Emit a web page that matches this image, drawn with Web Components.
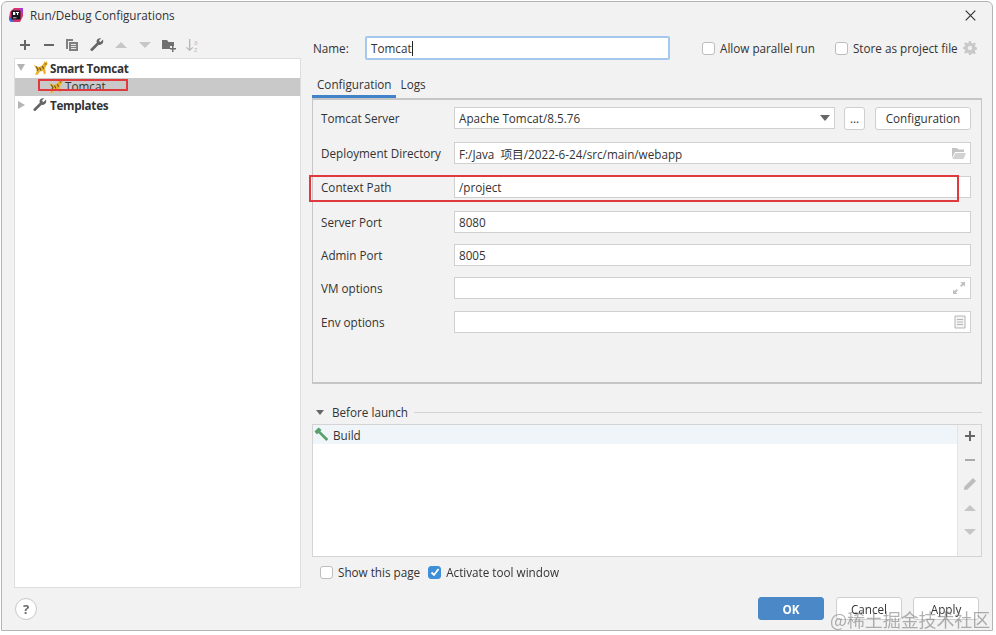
<!DOCTYPE html>
<html>
<head>
<meta charset="utf-8">
<title>Run/Debug Configurations</title>
<style>
  html, body { margin: 0; padding: 0; background: #fff; }
  body { width: 996px; height: 635px; overflow: hidden; font-family: "Open Sans", "Noto Sans CJK SC", sans-serif; font-size: 11.7px; color: #333; }
</style>
</head>
<body>
<run-dialog></run-dialog>

<script>
const icons = {
  plus: '<svg width="14" height="14" viewBox="0 0 14 14"><path d="M6 2h2v4h4v2H8v4H6V8H2V6h4z" fill="#666"/></svg>',
  minus: '<svg width="14" height="14" viewBox="0 0 14 14"><path d="M2 6h10v2H2z" fill="#666"/></svg>',
  copy: '<svg width="14" height="14" viewBox="0 0 14 14"><path d="M1 1h7v2H3v8H1z" fill="#808080"/><path d="M4 4h9v9H4z" fill="#808080"/><path d="M6 6h5v1H6zm0 2h5v1H6zm0 2h5v1H6z" fill="#e6e6e6"/></svg>',
  wrench: '<svg width="14" height="14" viewBox="0 0 14 14"><path d="M13 1.500 10.600 4l-1-.4L9 2.300 11.200.6C9.400-.2 7 .8 6.600 2.800c-.1.7 0 1.300.2 1.900L1 10.500c-.8.800-.8 1.500-.2 2.100s1.400.6 2.100-.1l5.800-5.800c2.700.9 5.400-1.700 4.300-4.700z" fill="currentColor"/></svg>',
  up: '<svg width="14" height="14" viewBox="0 0 14 14"><path d="M7 4l6 6H1z" fill="#c6c6c6"/></svg>',
  down: '<svg width="14" height="14" viewBox="0 0 14 14"><path d="M1 4h12l-6 6z" fill="#c6c6c6"/></svg>',
  folder: '<svg width="15" height="14" viewBox="0 0 15 14"><path d="M1 2h5l1.500 2H13v4H9v3H1z" fill="#707070"/><path d="M11 8h1.500v2H15v1.500h-2.500V14H11v-2.500H9V10h2z" fill="#707070"/></svg>',
  sort: '<svg width="15" height="15" viewBox="0 0 15 15"><path d="M4 1h1.300v10L7.500 9l.7.8L4.600 13 1 9.800l.8-.8L4 11z" fill="#b5b5b5"/><text x="9" y="6.500" font-size="6.500" font-family="Open Sans" fill="#bdbdbd">a</text><text x="9" y="14" font-size="7" font-family="Open Sans" fill="#bdbdbd">z</text></svg>',
  cat: '<svg width="15" height="14" viewBox="0 0 15 14"><path d="M.5 3.500 3 5l3 1 3-1.500L11 2l.3-2 1.200 1.200L14 .3l.5 2.700-1.500 2.500-1 2L13 12l-2 1.500-1-3.500-3 .5-2 3-3 .5 2-4.500-1.500-3z" fill="#eeb32e"/><path d="M3 5.500 5 8.500 4 10M6.500 6.500 8 9.500M9.500 5 10.500 8M11.500 3h2" stroke="#6b5a1e" stroke-width="1.200" fill="none"/></svg>',
  hammer: '<svg width="15" height="15" viewBox="0 0 15 15"><path d="M.5 4.500 4.500.5l3 2.300L6.300 4.200l8 7.900-2 2-7.900-8-1.400 1.400z" fill="#58a06c"/></svg>',
  pencil: '<svg width="14" height="14" viewBox="0 0 14 14"><path d="M10 1l3 3-8.500 8.500L1 13l.5-3.500z" fill="#bdbdbd"/></svg>',
  gear: '<svg width="14" height="14" viewBox="0 0 14 14"><path d="M6 0h2l.4 2 1.400.6L11.500 1.500 12.900 3l-1.100 1.600.6 1.400 1.600.4v2l-1.600.4-.6 1.400 1.100 1.700-1.400 1.400-1.700-1.100-1.400.6L8 14H6l-.4-1.700-1.400-.6-1.700 1.100-1.400-1.400 1.100-1.700-.6-1.400L0 8V6l1.600-.4.6-1.400L1.100 2.600 2.500 1.200l1.700 1.100L5.600 1.700z" fill="#c9c9c9"/><circle cx="7" cy="7" r="2.200" fill="#efefef"/></svg>',
  openFolder: '<svg width="15" height="13" viewBox="0 0 15 13"><path d="M1 1h5l1.500 1.500H13V5H4L1 11z" fill="#c4c4c4"/><path d="M4.500 6H15l-2.500 6H1.500z" fill="#d2d2d2"/></svg>',
  expand: '<svg width="14" height="14" viewBox="0 0 14 14"><path d="M8.500 1H13v4.500l-1.600-1.600-2 2-1.300-1.300 2-2zM5.500 13H1V8.500l1.600 1.600 2-2 1.300 1.300-2 2z" fill="#bfbfbf"/></svg>',
  doc: '<svg width="12" height="14" viewBox="0 0 12 14"><path d="M1 1h10v12H1z" fill="#f4f4f4" stroke="#b4b4b4"/><path d="M3 4h6v1H3zm0 2.500h6v1H3zm0 2.500h6v1H3z" fill="#b4b4b4"/></svg>',
  logo: '<svg width="14" height="14" viewBox="0 0 14 14"><path d="M1 4 5 0h6l3 3v5l-3 6H4L0 11z" fill="#d8336f"/><path d="M0 8 5 14H1.500L0 12z" fill="#3573e0"/><path d="M10 0h4v6z" fill="#a53ad8"/><rect x="2.500" y="2.500" width="9" height="9" fill="#15151c"/><path d="M4 4h2.300v3H4zm3 0h3v1H9.100v2H8V5H7zM4 9.500h3.500v.8H4z" fill="#fff"/></svg>'
}

/**
 * Shorthand for a custom element with a static shadow template.
 *
 * @param {string} name - The tag name.
 * @param {string} html - The shadow markup.
 * @param {Function} [setup] - Runs when the element is connected.
 */
function define (name, html, setup) {
  customElements.define(name, class extends HTMLElement {
    constructor () {
      super()
      this.attachShadow({ mode: 'open' }).innerHTML = html
    }

    connectedCallback () {
      if (setup) setup(this, this.shadowRoot)
    }
  })
}

define('ide-icon', `
  <style>:host { display: inline-flex; align-items: center; justify-content: center; color: #666; flex: none; }</style>
  <span id="i" style="display:inline-flex"></span>
`, (el, root) => {
  root.querySelector('#i').innerHTML = icons[el.getAttribute('name')]
})

define('check-box', `
  <style>
    :host { display: inline-flex; align-items: center; gap: 5px; white-space: nowrap; }
    #b { width: 13px; height: 13px; box-sizing: border-box; background: #fff; border: 1px solid #bdbdbd; border-radius: 3px; flex: none; display: flex; align-items: center; justify-content: center; }
    :host([checked]) #b { background: #3f8ed8; border-color: #3f8ed8; }
    svg { display: none; }
    :host([checked]) svg { display: block; }
  </style>
  <span id="b"><svg width="10" height="10" viewBox="0 0 10 10"><path d="M1.500 5.500 4 8l4.500-6" stroke="#fff" stroke-width="1.800" fill="none"/></svg></span><slot></slot>
`)

define('ide-button', `
  <style>
    :host { display: inline-flex; align-items: center; justify-content: center; height: 21px; background: #fff; border: 1px solid #cfcfcf; border-radius: 3px; box-sizing: content-box; flex: none; }
    :host([primary]) { background: #4a88c7; border-color: #4a88c7; color: #fff; font-weight: 700; }
  </style>
  <slot></slot>
`)

define('text-field', `
  <style>
    :host { display: flex; align-items: center; height: 20px; background: #fff; border: 1px solid #d0d0d0; padding: 0 4px; flex: 1; min-width: 0; }
    #t { flex: 1; white-space: pre; }
  </style>
  <span id="t"><slot></slot></span><slot name="end"></slot>
`)

define('form-row', `
  <style>
    :host { display: flex; align-items: center; height: 22px; }
    #l { width: 133px; flex: none; white-space: nowrap; }
    #f { flex: 1; display: flex; align-items: center; min-width: 0; }
  </style>
  <span id="l"></span><div id="f"><slot></slot></div>
`, (el, root) => {
  root.querySelector('#l').textContent = el.getAttribute('label')
})

define('tree-row', `
  <style>
    :host { display: flex; align-items: center; box-sizing: border-box; height: 18px; padding-bottom: 1px; gap: 2px; font-weight: 700; letter-spacing: -.3px; white-space: nowrap; }
    :host([open]) { height: 19px; padding-bottom: 2px; }
    :host([selected]) { background: #c9c9c9; font-weight: 400; letter-spacing: 0; padding-left: 33px; padding-bottom: 2px; }
    #a { width: 0; height: 0; flex: none; }
    :host([open]) #a { border-left: 4px solid transparent; border-right: 4px solid transparent; border-top: 7px solid #b4b4b4; margin: 0 6px 0 2px; }
    :host([closed]) #a { border-top: 4px solid transparent; border-bottom: 4px solid transparent; border-left: 7px solid #b4b4b4; margin: 0 6px 0 3px; }
    :host([selected]) #a { display: none; }
  </style>
  <span id="a"></span><slot></slot>
`)

define('config-tree', `
  <style>
    :host { display: block; width: 285px; height: 528px; background: #fff; border: 1px solid #dedede; }
    #tpl { margin-right: 1px; }
  </style>
  <tree-row open><ide-icon name="cat"></ide-icon>Smart Tomcat</tree-row>
  <tree-row selected><ide-icon name="cat"></ide-icon>Tomcat</tree-row>
  <tree-row closed><ide-icon id="tpl" name="wrench"></ide-icon>Templates</tree-row>
`)

define('tool-bar', `
  <style>
    :host { display: flex; align-items: center; height: 18px; gap: 10px; padding-left: 4px; }
    ide-icon[name="folder"], ide-icon[name="sort"] { margin-left: -1px; }
    ide-icon[name="copy"] { margin-left: -1px; margin-right: 1px; }
  </style>
  <ide-icon name="plus"></ide-icon><ide-icon name="minus"></ide-icon><ide-icon name="copy"></ide-icon><ide-icon name="wrench"></ide-icon><ide-icon name="up"></ide-icon><ide-icon name="down"></ide-icon><ide-icon name="folder"></ide-icon><ide-icon name="sort"></ide-icon>
`)

define('name-bar', `
  <style>
    :host { display: flex; align-items: center; height: 24px; padding-left: 1px; white-space: nowrap; }
    #n { width: 52px; flex: none; }
    #i { width: 297px; height: 20px; flex: none; background: #fff; border: 2px solid #a5c9ee; border-radius: 2px; display: flex; align-items: center; padding-left: 4px; }
    #c { width: 1px; height: 15px; background: #222; }
    #first { margin-left: 32px; }
    #second { margin-left: 20px; }
    ide-icon { margin-left: 5px; }
  </style>
  <span id="n">Name:</span>
  <div id="i">Tomcat<span id="c"></span></div>
  <check-box id="first">Allow parallel run</check-box>
  <check-box id="second">Store as project file</check-box>
  <ide-icon name="gear"></ide-icon>
`)

define('tab-bar', `
  <style>
    :host { display: flex; height: 24px; margin-top: 14px; white-space: nowrap; }
    span { padding: 0 4px 0 5px; line-height: 20px; box-sizing: border-box; }
    #a { border-bottom: 3px solid #4083c9; height: 24px; }
  </style>
  <span id="a">Configuration</span><span>Logs</span>
`)

define('config-panel', `
  <style>
    :host { display: flex; flex-direction: column; height: 275px; border: 1px solid #c6c6c6; border-width: 2px 1px 2px 1px; padding: 7px 10px 0 8px; }
    form-row + form-row { margin-top: 12px; }
    .wide { margin-top: 13px !important; }
    .tight { margin-top: 11px !important; }
    #dots { width: 19px; margin-left: 9px; }
    #conf { width: 94px; margin-left: 10px; }
    #arrow { width: 0; height: 0; border-left: 5px solid transparent; border-right: 5px solid transparent; border-top: 6px solid #666; }
  </style>
  <form-row label="Tomcat Server"><text-field>Apache Tomcat/8.5.76<span id="arrow" slot="end"></span></text-field><ide-button id="dots">...</ide-button><ide-button id="conf">Configuration</ide-button></form-row>
  <form-row class="wide" label="Deployment Directory"><text-field>F:/Java  项目/2022-6-24/src/main/webapp<ide-icon slot="end" name="openFolder"></ide-icon></text-field></form-row>
  <form-row label="Context Path"><text-field>/project</text-field></form-row>
  <form-row class="wide" label="Server Port"><text-field>8080</text-field></form-row>
  <form-row class="tight" label="Admin Port"><text-field>8005</text-field></form-row>
  <form-row class="tight" label="VM options"><text-field><ide-icon slot="end" name="expand"></ide-icon></text-field></form-row>
  <form-row label="Env options"><text-field><ide-icon slot="end" name="doc"></ide-icon></text-field></form-row>
`)

define('before-launch', `
  <style>
    :host { display: block; margin-top: 19px; }
    #h { display: flex; align-items: center; height: 18px; margin-top: 1px; white-space: nowrap; }
    #t { width: 0; height: 0; border-left: 4px solid transparent; border-right: 4px solid transparent; border-top: 5px solid #666; margin: 0 8px 0 4px; }
    #r { flex: 1; height: 1px; background: #d4d4d4; margin-left: 6px; }
    #l { display: flex; height: 131px; margin-top: 3px; border: 1px solid #d4d4d4; background: #fff; }
    #m { flex: 1; }
    #row { display: flex; align-items: center; gap: 4px; height: 19px; padding-left: 1px; background: #f0f5f9; }
    #s { width: 23px; background: #f2f2f2; border-left: 1px solid #e4e4e4; display: flex; flex-direction: column; align-items: center; padding-top: 4px; gap: 10px; }
  </style>
  <div id="h"><span id="t"></span>Before launch<span id="r"></span></div>
  <div id="l">
    <div id="m"><div id="row"><ide-icon name="hammer"></ide-icon>Build</div></div>
    <div id="s"><ide-icon name="plus"></ide-icon><ide-icon name="minus" style="opacity:.5"></ide-icon><ide-icon name="pencil"></ide-icon><ide-icon name="up"></ide-icon><ide-icon name="down"></ide-icon></div>
  </div>
`)

define('dialog-footer', `
  <style>
    :host { display: flex; align-items: center; height: 23px; padding: 0 13px 0 13px; }
    #h { width: 20px; height: 20px; border: 1px solid #c8c8c8; border-radius: 50%; background: #fff; display: flex; align-items: center; justify-content: center; font-weight: 700; color: #6a6a6a; font-size: 13px; }
    #sp { flex: 1; }
    ide-button { width: 64px; }
    #cancel { margin-left: 12px; }
    #apply { margin-left: 11px; }
  </style>
  <div id="h">?</div><div id="sp"></div>
  <ide-button primary>OK</ide-button><ide-button id="cancel">Cancel</ide-button><ide-button id="apply">Apply</ide-button>
`)

define('run-dialog', `
  <style>
    :host { display: flex; flex-direction: column; position: relative; width: 990px; height: 628px; margin: 1px 0 0 1px; background: #f2f2f2; border: 1px solid #b4b4b4; border-radius: 6px 6px 0 0; box-sizing: content-box; filter: blur(.3px); }
    #title { display: flex; align-items: center; height: 26px; padding: 0 16px 2px 7px; gap: 7px; flex: none; }
    #title span { flex: 1; }
    #x { display: flex; }
    #main { display: flex; flex: none; height: 561px; padding-top: 6px; gap: 11px; }
    #left { width: 287px; margin-left: 12px; flex: none; }
    #right { width: 670px; flex: none; }
    config-tree { margin-top: 4px; }
    #opts { display: flex; gap: 8px; padding: 6px 0 0 8px; height: 18px; }
    .mark { position: absolute; border: 2px solid #e0393e; box-sizing: border-box; }
    #m1 { left: 36px; top: 77px; width: 90px; height: 12px; }
    #m2 { left: 307px; top: 173px; width: 650px; height: 27px; }
    #wm { position: absolute; left: 828px; top: 604px; font: 18px "Noto Sans CJK SC", sans-serif; color: rgba(125,125,125,.6); white-space: nowrap; letter-spacing: -.1px; }
  </style>
  <div id="title"><ide-icon name="logo"></ide-icon><span>Run/Debug Configurations</span>
    <div id="x"><svg width="11" height="11" viewBox="0 0 11 11"><path d="M.7.7l9.600 9.600M10.300.7.700 10.300" stroke="#333" stroke-width="1.200"/></svg></div></div>
  <div id="main">
    <div id="left"><tool-bar></tool-bar><config-tree></config-tree></div>
    <div id="right">
      <name-bar></name-bar>
      <tab-bar></tab-bar>
      <config-panel></config-panel>
      <before-launch></before-launch>
      <div id="opts"><check-box>Show this page</check-box><check-box checked>Activate tool window</check-box></div>
    </div>
  </div>
  <dialog-footer></dialog-footer>
  <div class="mark" id="m1"></div>
  <div class="mark" id="m2"></div>
  <div id="wm">@稀土掘金技术社区</div>
`)
</script>
</body>
</html>
